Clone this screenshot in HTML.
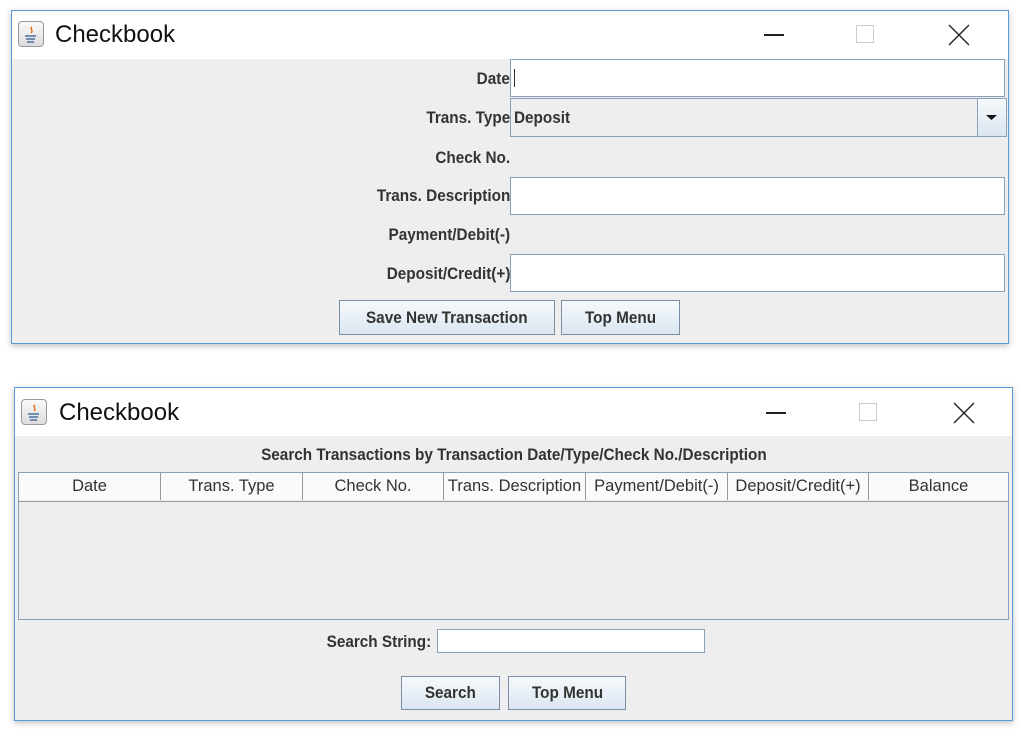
<!DOCTYPE html>
<html><head><style>
body{margin:0;width:1024px;height:731px;background:#fff;position:relative;overflow:hidden;font-family:"Liberation Sans",Arial,sans-serif;}
.a{position:absolute;}
.win{position:absolute;border:1px solid #5b9bd5;background:#eeeeee;box-shadow:0 2px 6px rgba(0,0,0,.25);}
.tb{position:absolute;left:0;right:0;top:0;height:48px;background:#fff;}
.title{position:absolute;font-size:24px;color:#111;}
.lbl{position:absolute;font-weight:bold;font-size:17px;color:#333;text-align:right;transform:scaleX(.9);transform-origin:right center;white-space:nowrap;}
.fld{position:absolute;background:#fff;border:1px solid #8aa0b8;box-sizing:border-box;}
.btn{position:absolute;box-sizing:border-box;border:1px solid #7a8fa6;background:linear-gradient(#f6f9fc,#dbe6f1);font-weight:bold;font-size:17px;color:#333;text-align:center;white-space:nowrap;}
.btn span{display:inline-block;transform:scaleX(.9);}
.ico{position:absolute;width:26px;height:26px;border:1px solid #999;border-radius:4px;background:linear-gradient(#fafafa,#ddd);box-sizing:border-box;}
.th{position:absolute;top:0;height:27px;line-height:27px;font-size:16.5px;color:#333;text-align:center;border-right:1px solid #999;box-sizing:border-box;background:#fafafa;white-space:nowrap;}
</style></head><body>

<!-- Window 1 -->
<div class="win" style="left:11px;top:10px;width:996px;height:332px;">
 <div class="tb">
  <div class="ico" style="left:6px;top:10px;"><svg width="24" height="24"><path d="M13 5c-3 2 2 3-1 6" stroke="#e07020" fill="none" stroke-width="1.5"/><path d="M6 14h11M7 17h9M8 20h7" stroke="#4a6fa0" stroke-width="1.5"/></svg></div>
  <div class="title" style="left:43px;top:10px;">Checkbook</div>
  <div class="a" style="left:752px;top:23px;width:20px;height:1.5px;background:#222;"></div>
  <div class="a" style="left:844px;top:14px;width:18px;height:18px;border:1px solid #ccc;box-sizing:border-box;"></div>
  <svg class="a" style="left:936px;top:13px;" width="22" height="22"><path d="M1 1L21 21M21 1L1 21" stroke="#222" stroke-width="1.4"/></svg>
 </div>
 <div class="lbl" style="right:498px;top:58px;">Date</div>
 <div class="fld" style="left:498px;top:48px;width:495px;height:38px;"><div class="a" style="left:3px;top:9px;width:1px;height:18px;background:#333"></div></div>
 <div class="lbl" style="right:498px;top:97px;">Trans. Type</div>
 <div class="a" style="left:498px;top:87px;width:497px;height:39px;border:1px solid #8aa0b8;box-sizing:border-box;background:#eeeeee;">
  <div class="a" style="left:3px;top:9px;font-size:17px;font-weight:bold;color:#333;transform:scaleX(.9);transform-origin:left;">Deposit</div>
  <div class="a" style="right:0;top:0;width:28px;height:37px;border-left:1px solid #8aa0b8;background:linear-gradient(#f6f9fc,#dbe6f1);"><svg width="28" height="37"><path d="M8 16h11l-5.5 5z" fill="#111"/></svg></div>
 </div>
 <div class="lbl" style="right:498px;top:137px;">Check No.</div>
 <div class="lbl" style="right:498px;top:175px;">Trans. Description</div>
 <div class="fld" style="left:498px;top:166px;width:495px;height:38px;"></div>
 <div class="lbl" style="right:498px;top:214px;">Payment/Debit(-)</div>
 <div class="lbl" style="right:498px;top:253px;">Deposit/Credit(+)</div>
 <div class="fld" style="left:498px;top:243px;width:495px;height:38px;"></div>
 <div class="btn" style="left:327px;top:289px;width:216px;height:35px;line-height:33px;"><span>Save New Transaction</span></div>
 <div class="btn" style="left:549px;top:289px;width:119px;height:35px;line-height:33px;"><span>Top Menu</span></div>
</div>

<!-- Window 2 -->
<div class="win" style="left:14px;top:387px;width:997px;height:332px;">
 <div class="tb">
  <div class="ico" style="left:6px;top:11px;"><svg width="24" height="24"><path d="M13 5c-3 2 2 3-1 6" stroke="#e07020" fill="none" stroke-width="1.5"/><path d="M6 14h11M7 17h9M8 20h7" stroke="#4a6fa0" stroke-width="1.5"/></svg></div>
  <div class="title" style="left:44px;top:11px;">Checkbook</div>
  <div class="a" style="left:751px;top:24px;width:20px;height:1.5px;background:#222;"></div>
  <div class="a" style="left:844px;top:15px;width:18px;height:18px;border:1px solid #ccc;box-sizing:border-box;"></div>
  <svg class="a" style="left:938px;top:14px;" width="22" height="22"><path d="M1 1L21 21M21 1L1 21" stroke="#222" stroke-width="1.4"/></svg>
 </div>
 <div class="a" style="left:0;right:0;top:57px;text-align:center;font-weight:bold;font-size:17px;color:#333;white-space:nowrap;"><span style="display:inline-block;transform:scaleX(.9);">Search Transactions by Transaction Date/Type/Check No./Description</span></div>
 <div class="a" style="left:3px;top:84px;width:991px;height:148px;border:1px solid #8aa0b8;box-sizing:border-box;background:#eeeeee;">
  <div class="a" style="left:0;top:0;width:989px;height:28px;border-bottom:1px solid #999;">
   <div class="th" style="left:0;width:142px;">Date</div>
   <div class="th" style="left:142px;width:142px;">Trans. Type</div>
   <div class="th" style="left:284px;width:141px;">Check No.</div>
   <div class="th" style="left:425px;width:142px;">Trans. Description</div>
   <div class="th" style="left:567px;width:142px;">Payment/Debit(-)</div>
   <div class="th" style="left:709px;width:141px;">Deposit/Credit(+)</div>
   <div class="th" style="left:850px;width:139px;border-right:none;">Balance</div>
  </div>
 </div>
 <div class="lbl" style="right:581px;top:244px;">Search String:</div>
 <div class="fld" style="left:422px;top:241px;width:268px;height:24px;"></div>
 <div class="btn" style="left:386px;top:288px;width:99px;height:34px;line-height:32px;"><span>Search</span></div>
 <div class="btn" style="left:493px;top:288px;width:118px;height:34px;line-height:32px;"><span>Top Menu</span></div>
</div>
</body></html>
